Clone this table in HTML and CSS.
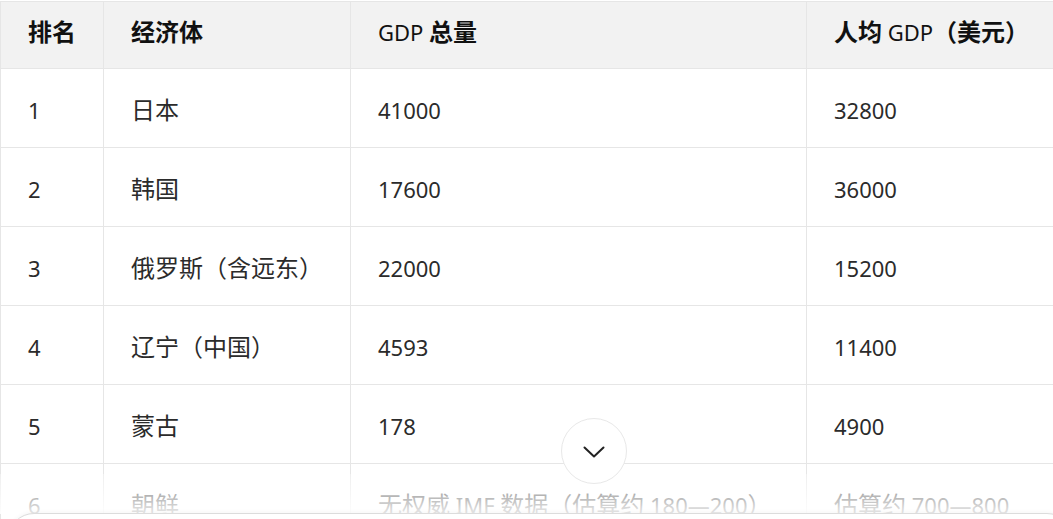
FILE: index.html
```html
<!DOCTYPE html>
<html lang="zh-CN">
<head>
<meta charset="utf-8">
<title>GDP 表</title>
<link rel="stylesheet" href="styles.css">
</head>
<body>
<div class="viewport">
  <table class="gdp">
    <colgroup>
      <col class="c-rank">
      <col class="c-name">
      <col class="c-gdp">
      <col class="c-per">
    </colgroup>
    <thead>
      <tr><th><span class="zh">排名</span></th><th><span class="zh">经济体</span></th><th>GDP <span class="zh">总量</span></th><th><span class="zh">人均</span> GDP<span class="zh">（美元）</span></th></tr>
    </thead>
    <tbody>
      <tr><td>1</td><td><span class="zh">日本</span></td><td>41000</td><td>32800</td></tr>
      <tr><td>2</td><td><span class="zh">韩国</span></td><td>17600</td><td>36000</td></tr>
      <tr><td>3</td><td><span class="zh">俄罗斯（含远东）</span></td><td>22000</td><td>15200</td></tr>
      <tr><td>4</td><td><span class="zh">辽宁（中国）</span></td><td>4593</td><td>11400</td></tr>
      <tr><td>5</td><td><span class="zh">蒙古</span></td><td>178</td><td>4900</td></tr>
      <tr><td>6</td><td><span class="zh">朝鲜</span></td><td><span class="zh">无权威</span> IMF <span class="zh">数据（估算约</span> 180—200<span class="zh">）</span></td><td><span class="zh">估算约</span> 700—800</td></tr>
    </tbody>
  </table>
  <div class="fade"></div>
  <button class="scroll-btn" aria-label="向下滚动">
    <svg width="22" height="12" viewBox="0 0 22 12" fill="none" stroke="#222" stroke-width="2" stroke-linecap="round" stroke-linejoin="round"><path d="M1.5 1.5 L11 10.5 L20.5 1.5"/></svg>
  </button>
  <div class="composer"></div>
</div>
</body>
</html>
```
FILE: styles.css
```css
html, body {
  margin: 0;
  padding: 0;
  background: #fff;
}
.viewport {
  position: relative;
  width: 1053px;
  height: 519px;
  overflow: hidden;
  font-family: "Noto Sans", "Noto Sans CJK SC", sans-serif;
  color: #2b2b2b;
}
.gdp {
  border-collapse: collapse;
  table-layout: fixed;
  width: 1300px;
  margin-top: 1px;
  font-size: 22px;
  line-height: 30px;
}
.zh {
  font-family: "Noto Sans CJK SC", sans-serif;
  font-size: 24px;
}
.c-rank { width: 103px; }
.c-name { width: 247px; }
.c-gdp { width: 456px; }
.c-per { width: 494px; }
.gdp th, .gdp td {
  border: 1px solid #e6e6e6;
  text-align: left;
  padding: 0 0 0 27px;
  white-space: nowrap;
  vertical-align: middle;
}
.gdp th {
  background: #f2f2f2;
  height: 58px;
  padding-bottom: 8px;
  font-weight: 400;
  color: #111;
}
.gdp th .zh {
  font-weight: 700;
}
.gdp td {
  height: 75px;
  padding-top: 3px;
  font-weight: 400;
}
.fade {
  position: absolute;
  left: 0;
  right: 0;
  top: 474px;
  height: 40px;
  background: linear-gradient(to bottom, rgba(255,255,255,0.35), rgba(255,255,255,0.9));
}
.scroll-btn {
  position: absolute;
  left: 561px;
  top: 418px;
  width: 66px;
  height: 66px;
  border-radius: 50%;
  border: 1px solid #e8e8e8;
  background: #fff;
  display: flex;
  align-items: center;
  justify-content: center;
  padding: 0;
  padding-top: 2px;
}
.composer {
  position: absolute;
  left: 8px;
  right: -20px;
  top: 513px;
  height: 80px;
  border: 1px solid #dcdcdc;
  border-radius: 26px;
  background: #fff;
  box-shadow: 0 -1px 4px rgba(0,0,0,0.04);
}
```
